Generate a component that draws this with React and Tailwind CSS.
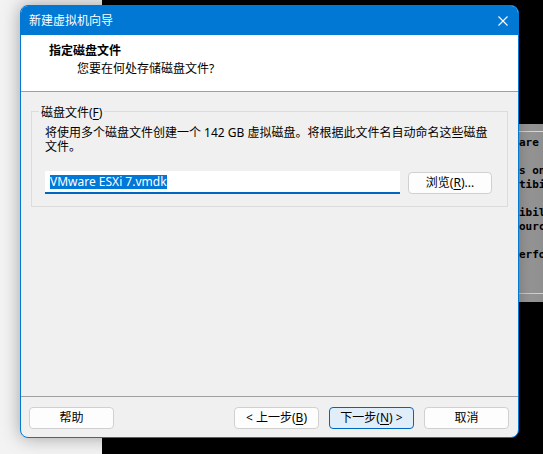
import React from "react";

function Btn({ children, primary = false, className = "" }) {
  const tone = primary
    ? "border-[#0067c0] bg-[#e0eef9]"
    : "border-[#d0d0d0] bg-[#fdfdfd]";
  return (
    <button
      type="button"
      className={`flex h-[22px] items-center justify-center rounded-[4px] border text-[12px] leading-none text-black ${tone} ${className}`}
    >
      {children}
    </button>
  );
}

export default function App() {
  return (
    <div className="relative h-[454px] w-[543px] overflow-hidden bg-black font-['Noto_Sans','Noto_Sans_CJK_SC',sans-serif]">
      {/* window lying behind, left side */}
      <div className="absolute left-0 top-0 h-full w-[102px] bg-[#f3f3f3]" />

      {/* console window, right side */}
      <div className="absolute left-[505px] top-[124px] flex h-[178px] w-[60px] flex-col bg-gradient-to-r from-[#a9a9a9] to-[#7f7f7f] pt-[7px]">
        <div className="h-px bg-[#d8d8d8]" />
        <pre className="pl-[14px] pt-[4px] font-['DejaVu_Sans_Mono',monospace] text-[11px] font-bold leading-[14px] text-black">
{`are

s on
tibi

ibil
ourc

erfo`}
        </pre>
        <div className="mt-auto mb-[8px] h-px bg-[#d0d0d0]" />
      </div>

      {/* wizard dialog */}
      <div className="absolute left-[20px] top-[5px] flex h-[433px] w-[499px] flex-col overflow-hidden rounded-[8px] border border-[#0078d4] bg-[#f0f0f0] shadow-[0_0_18px_rgba(0,0,0,0.35)]">
        {/* title bar */}
        <div className="flex h-[29px] shrink-0 items-center bg-[#0078d4] pl-[8px] pr-[10px]">
          <span className="text-[12px] leading-none text-white">新建虚拟机向导</span>
          <svg className="ml-auto" width="10" height="10" viewBox="0 0 10 10">
            <path d="M0.5 0.5 L9.5 9.5 M9.5 0.5 L0.5 9.5" stroke="#fff" strokeWidth="1.1" fill="none" />
          </svg>
        </div>

        {/* header */}
        <div className="h-[56px] shrink-0 bg-white pl-[28px] pt-[8px] text-black">
          <div className="text-[12px] font-bold leading-[16px]">指定磁盘文件</div>
          <div className="mt-[2px] pl-[28px] text-[12px] leading-[16px]">您要在何处存储磁盘文件?</div>
        </div>
        <div className="h-px shrink-0 bg-[#a0a0a0]" />

        {/* body */}
        <div className="flex-1 pt-[19px]">
          <div className="relative ml-[10px] h-[96px] w-[477px] border border-[#dcdcdc] pl-[13px] pt-[14px]">
            <span className="absolute left-[7px] top-[-6px] bg-[#f0f0f0] px-[2px] text-[12px] leading-[14px] text-black">
              磁盘文件(<span className="underline underline-offset-2">F</span>)
            </span>
            <p className="text-[12px] leading-[14px] text-black">
              将使用多个磁盘文件创建一个 142 GB 虚拟磁盘。将根据此文件名自动命名这些磁盘
              <br />
              文件。
            </p>
            <div className="mt-[17px] flex items-center gap-[8px]">
              <div className="flex h-[23px] w-[355px] items-center border-b-2 border-[#0067c0] bg-white pl-[5px]">
                <span className="bg-[#0078d7] text-[12px] leading-[14px] text-white">VMware ESXi 7.vmdk</span>
              </div>
              <Btn className="w-[84px]">
                浏览(<span className="underline underline-offset-2">R</span>)...
              </Btn>
            </div>
          </div>
        </div>

        {/* footer */}
        <div className="h-px shrink-0 bg-[#a0a0a0]" />
        <div className="flex h-[40px] shrink-0 items-start pl-[8px] pr-[9px] pt-[10px]">
          <Btn className="w-[85px]">帮助</Btn>
          <div className="ml-auto flex gap-[10px]">
            <Btn className="w-[85px]">
              &lt; 上一步(<span className="underline underline-offset-2">B</span>)
            </Btn>
            <Btn primary className="w-[85px]">
              下一步(<span className="underline underline-offset-2">N</span>) &gt;
            </Btn>
            <Btn className="w-[85px]">取消</Btn>
          </div>
        </div>
      </div>
    </div>
  );
}
